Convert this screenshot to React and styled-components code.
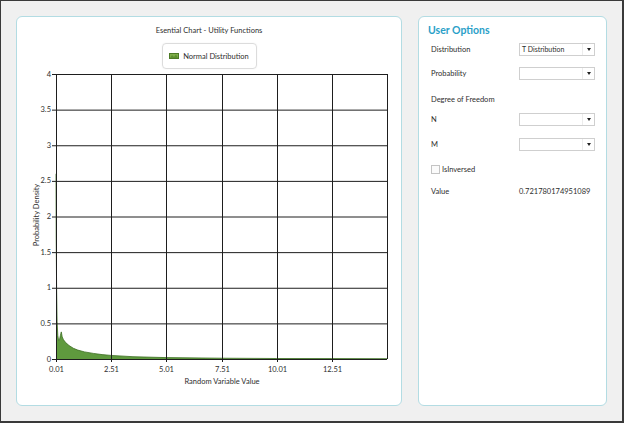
import styled, { createGlobalStyle } from "styled-components";

const GlobalStyle = createGlobalStyle`
  html, body {
    margin: 0;
    padding: 0;
    background: #f0f0f0;
  }
  * {
    box-sizing: border-box;
  }
`;

const FONT = `"Segoe UI", Lato, "Open Sans", sans-serif`;

const points = [
  [0.01, 2.6], [0.02, 1.7], [0.035, 1.0], [0.06, 0.52], [0.09, 0.33],
  [0.13, 0.26], [0.17, 0.27], [0.21, 0.33], [0.25, 0.38], [0.29, 0.31],
  [0.35, 0.27], [0.45, 0.23], [0.6, 0.19], [0.8, 0.15], [1.0, 0.125],
  [1.3, 0.1], [1.7, 0.078], [2.1, 0.062], [2.5, 0.05], [3.5, 0.032],
  [5, 0.02], [7.5, 0.011], [10, 0.007], [12.5, 0.005], [15.01, 0.004],
];

const xTicks = ["0.01", "2.51", "5.01", "7.51", "10.01", "12.51"];
const yTicks = [0, 0.5, 1, 1.5, 2, 2.5, 3, 3.5, 4];

const PLOT = { left: 39, right: 370, top: 4, bottom: 289 };
const xs = (v) => PLOT.left + ((v - 0.01) / 15) * (PLOT.right - PLOT.left);
const ys = (d) => PLOT.top + ((4 - d) / 4) * (PLOT.bottom - PLOT.top);

const options = [
  { label: "Distribution", value: "T Distribution", h: 24 },
  { label: "Probability", value: "", h: 25 },
  { label: "Degree of Freedom", h: 21, pad: 5 },
  { label: "N", value: "", h: 25 },
  { label: "M", value: "", h: 25 },
];

export default function App() {
  const area =
    `M${xs(0.01)},${ys(0)} ` +
    points.map(([v, d]) => `L${xs(v).toFixed(1)},${ys(d).toFixed(1)}`).join(" ") +
    ` L${xs(15.01)},${ys(0)} Z`;
  const line = points
    .map(([v, d], i) => `${i ? "L" : "M"}${xs(v).toFixed(1)},${ys(d).toFixed(1)}`)
    .join(" ");

  return (
    <>
      <GlobalStyle />
      <Screen>
        <ChartPanel>
          <ChartTitle>Esential Chart - Utility Functions</ChartTitle>
          <Legend>
            <LegendIcon viewBox="0 0 10 6">
              <rect x="0.5" y="0.5" width="9" height="5" fill="#7fae4a" stroke="#4d7a26" />
              <path d="M1 5 L3 2 L5 4 L7 1.5 L9 5 Z" fill="#5d8f30" />
            </LegendIcon>
            Normal Distribution
          </Legend>
          <Plot width="384" height="335" viewBox="0 0 384 335">
            <path d={area} fill="#5f9a3e" />
            <path d={line} fill="none" stroke="#3d6f23" strokeWidth="0.8" />
            {yTicks.map((d) => (
              <g key={d}>
                <line x1={PLOT.left - 4} x2={PLOT.right} y1={ys(d) + 0.5} y2={ys(d) + 0.5} stroke="#1e1e1e" strokeWidth="1" />
                <text x={PLOT.left - 5} y={ys(d) + 2.5} textAnchor="end" className="tick">
                  {d}
                </text>
              </g>
            ))}
            {xTicks.map((t) => {
              const x = Math.round(xs(parseFloat(t))) + 0.5;
              return (
                <g key={t}>
                  <line x1={x} x2={x} y1={PLOT.top} y2={PLOT.bottom + 3} stroke="#1e1e1e" strokeWidth="1" />
                  <text x={x} y={301.5} textAnchor="middle" className="tick">
                    {t}
                  </text>
                </g>
              );
            })}
            <line x1={PLOT.right + 0.5} x2={PLOT.right + 0.5} y1={PLOT.top} y2={PLOT.bottom} stroke="#1e1e1e" strokeWidth="1" />
            <text x="205" y="313.5" textAnchor="middle" className="tick">
              Random Variable Value
            </text>
            <text x="0" y="0" textAnchor="middle" className="tick" transform="translate(21.5 145) rotate(-90)">
              Probability Density
            </text>
          </Plot>
        </ChartPanel>

        <OptionsPanel>
          <OptionsTitle>User Options</OptionsTitle>
          {options.map((o) => (
            <Row key={o.label} h={o.h} pad={o.pad}>
              <Label>{o.label}</Label>
              {o.value !== undefined && (
                <Select>
                  <SelectText>{o.value}</SelectText>
                  <Arrow />
                </Select>
              )}
            </Row>
          ))}
          <Row h={25}>
            <Check />
            <Label>IsInversed</Label>
          </Row>
          <Row h={19}>
            <Label>Value</Label>
            <ValueText>0.721780174951089</ValueText>
          </Row>
        </OptionsPanel>
      </Screen>
    </>
  );
}

const Screen = styled.div`
  width: 624px;
  height: 423px;
  border-top: 1px solid #3a3a3a;
  border-left: 1px solid #3a3a3a;
  border-right: 2px solid #3a3a3a;
  border-bottom: 2px solid #3a3a3a;
  background: #f0f0f0;
  padding: 15px 0 0 15px;
  display: flex;
  gap: 16px;
  font-family: ${FONT};
  color: #2e2e2e;
`;

const Card = styled.div`
  height: 390px;
  background: #ffffff;
  border: 1px solid #b3dce3;
  border-radius: 6px;
`;

const ChartPanel = styled(Card)`
  width: 386px;
  padding-top: 8px;
  display: flex;
  flex-direction: column;
  align-items: center;
`;

const ChartTitle = styled.div`
  font-size: 7.5px;
  line-height: 12px;
  height: 12px;
`;

const Legend = styled.div`
  margin-top: 6px;
  width: 95px;
  height: 26px;
  border: 1px solid #dcdcdc;
  border-radius: 4px;
  display: flex;
  align-items: center;
  justify-content: center;
  gap: 4px;
  font-size: 7.5px;
  box-shadow: 0 0 2px rgba(0, 0, 0, 0.06);
`;

const LegendIcon = styled.svg`
  width: 10px;
  height: 6px;
`;

const Plot = styled.svg`
  display: block;
  margin-top: 1px;
  align-self: flex-start;

  .tick {
    font-family: ${FONT};
    font-size: 7.5px;
    fill: #2e2e2e;
  }
`;

const OptionsPanel = styled(Card)`
  width: 189px;
  padding: 6px 0 0 12px;
  display: flex;
  flex-direction: column;
`;

const OptionsTitle = styled.div`
  font-size: 10.5px;
  font-weight: 700;
  line-height: 14px;
  height: 14px;
  margin-left: -3px;
  color: #2aa0c8;
`;

const Row = styled.div`
  height: ${(p) => p.h}px;
  padding-top: ${(p) => p.pad || 0}px;
  display: flex;
  align-items: center;
  font-size: 7.5px;
`;

const Label = styled.div`
  width: 88px;
  flex: none;
`;

const Select = styled.div`
  width: 76px;
  height: 13px;
  border: 1px solid #cfcfcf;
  background: #ffffff;
  display: flex;
  align-items: center;
`;

const SelectText = styled.div`
  flex: 1;
  padding-left: 2px;
  font-size: 7px;
`;

const Arrow = styled.div`
  width: 12px;
  height: 100%;
  border-left: 1px solid #ececec;
  display: flex;
  align-items: center;
  justify-content: center;
  &::after {
    content: "";
    border-left: 2.5px solid transparent;
    border-right: 2.5px solid transparent;
    border-top: 3px solid #222;
  }
`;

const Check = styled.div`
  width: 9px;
  height: 9px;
  border: 1px solid #c4c4c4;
  background: #fbfbfb;
  margin-right: 2px;
`;

const ValueText = styled.div`
  font-size: 7.5px;
`;
